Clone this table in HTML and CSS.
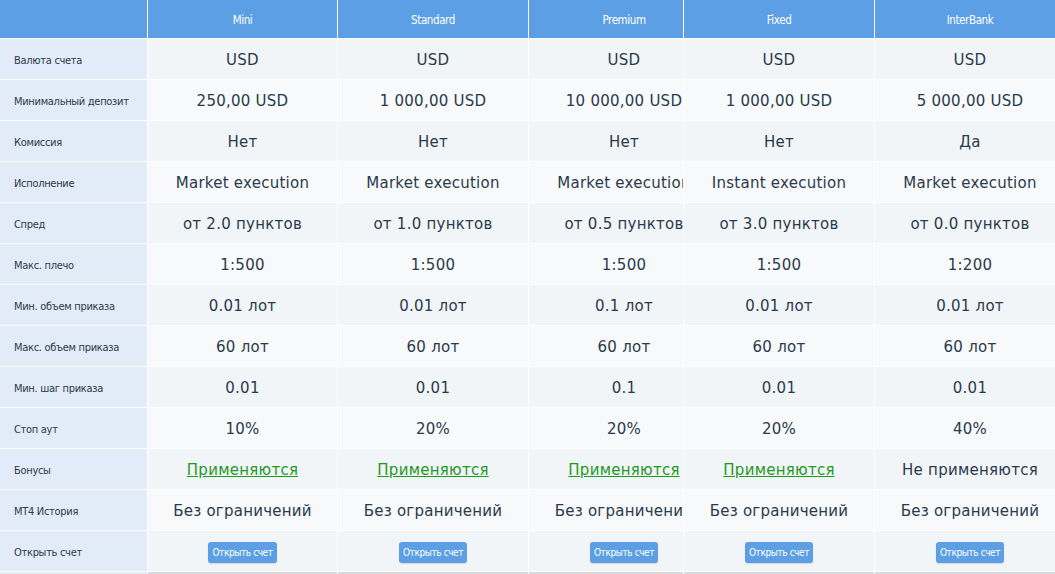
FILE: index.html
```html
<!DOCTYPE html>
<html lang="ru">
<head>
<meta charset="utf-8">
<link rel="stylesheet" href="styles.css">
</head>
<body>
<div class="table">
  <div class="row head">
    <div class="c lab"></div>
    <div class="c">Mini</div>
    <div class="c">Standard</div>
    <div class="c clip"><span class="in">Premium</span></div>
    <div class="c">Fixed</div>
    <div class="c">InterBank</div>
  </div>
  <div class="row a">
    <div class="c lab">Валюта счета</div>
    <div class="c">USD</div><div class="c">USD</div><div class="c clip"><span class="in">USD</span></div><div class="c">USD</div><div class="c">USD</div>
  </div>
  <div class="row b">
    <div class="c lab">Минимальный депозит</div>
    <div class="c">250,00 USD</div><div class="c">1 000,00 USD</div><div class="c clip"><span class="in">10 000,00 USD</span></div><div class="c">1 000,00 USD</div><div class="c">5 000,00 USD</div>
  </div>
  <div class="row a">
    <div class="c lab">Комиссия</div>
    <div class="c">Нет</div><div class="c">Нет</div><div class="c clip"><span class="in">Нет</span></div><div class="c">Нет</div><div class="c">Да</div>
  </div>
  <div class="row b">
    <div class="c lab">Исполнение</div>
    <div class="c">Market execution</div><div class="c">Market execution</div><div class="c clip"><span class="in">Market execution</span></div><div class="c">Instant execution</div><div class="c">Market execution</div>
  </div>
  <div class="row a">
    <div class="c lab">Спред</div>
    <div class="c">от 2.0 пунктов</div><div class="c">от 1.0 пунктов</div><div class="c clip"><span class="in">от 0.5 пунктов</span></div><div class="c">от 3.0 пунктов</div><div class="c">от 0.0 пунктов</div>
  </div>
  <div class="row b">
    <div class="c lab">Макс. плечо</div>
    <div class="c">1:500</div><div class="c">1:500</div><div class="c clip"><span class="in">1:500</span></div><div class="c">1:500</div><div class="c">1:200</div>
  </div>
  <div class="row a">
    <div class="c lab">Мин. объем приказа</div>
    <div class="c">0.01 лот</div><div class="c">0.01 лот</div><div class="c clip"><span class="in">0.1 лот</span></div><div class="c">0.01 лот</div><div class="c">0.01 лот</div>
  </div>
  <div class="row b">
    <div class="c lab">Макс. объем приказа</div>
    <div class="c">60 лот</div><div class="c">60 лот</div><div class="c clip"><span class="in">60 лот</span></div><div class="c">60 лот</div><div class="c">60 лот</div>
  </div>
  <div class="row a">
    <div class="c lab">Мин. шаг приказа</div>
    <div class="c">0.01</div><div class="c">0.01</div><div class="c clip"><span class="in">0.1</span></div><div class="c">0.01</div><div class="c">0.01</div>
  </div>
  <div class="row b">
    <div class="c lab">Стоп аут</div>
    <div class="c">10%</div><div class="c">20%</div><div class="c clip"><span class="in">20%</span></div><div class="c">20%</div><div class="c">40%</div>
  </div>
  <div class="row a">
    <div class="c lab">Бонусы</div>
    <div class="c"><a class="green" href="#">Применяются</a></div><div class="c"><a class="green" href="#">Применяются</a></div><div class="c clip"><span class="in"><a class="green" href="#">Применяются</a></span></div><div class="c"><a class="green" href="#">Применяются</a></div><div class="c">Не применяются</div>
  </div>
  <div class="row b">
    <div class="c lab">МТ4 История</div>
    <div class="c">Без ограничений</div><div class="c">Без ограничений</div><div class="c clip"><span class="in">Без ограничений</span></div><div class="c">Без ограничений</div><div class="c">Без ограничений</div>
  </div>
  <div class="row a">
    <div class="c lab">Открыть счет</div>
    <div class="c"><a class="btn" href="#">Открыть счет</a></div><div class="c"><a class="btn" href="#">Открыть счет</a></div><div class="c clip"><span class="in"><a class="btn" href="#">Открыть счет</a></span></div><div class="c"><a class="btn" href="#">Открыть счет</a></div><div class="c"><a class="btn" href="#">Открыть счет</a></div>
  </div>
  <div class="row tail">
    <div class="c lab"></div><div class="c"></div><div class="c"></div><div class="c"></div><div class="c"></div><div class="c"></div>
  </div>
</div>
</body>
</html>
```

FILE: styles.css
```css
html, body {
  margin: 0;
  padding: 0;
  background: #ffffff;
  overflow: hidden;
}
body {
  width: 1055px;
  height: 574px;
}
.table {
  display: flex;
  flex-direction: column;
  row-gap: 1px;
  width: 1070px;
  background: #ffffff;
}
.row {
  display: grid;
  grid-template-columns: 147px 189px 190px 154px 190px 190px;
  column-gap: 1px;
  height: 40px;
}
.c {
  display: flex;
  align-items: center;
  justify-content: center;
  box-sizing: border-box;
  padding-top: 2px;
  white-space: nowrap;
  font-family: "DejaVu Sans", sans-serif;
  font-size: 15px;
  letter-spacing: 0.25px;
  color: #2a3a4c;
}
.row.a .c { background: #f2f5f8; }
.row.b .c { background: #f7f9fa; }
.row .c.lab {
  background: #e1ecf8;
  justify-content: flex-start;
  padding-left: 14px;
  padding-top: 3px;
  font-family: "DejaVu Sans Condensed", "DejaVu Sans", sans-serif;
  font-stretch: condensed;
  font-size: 11px;
  letter-spacing: -0.3px;
  color: #2c3a48;
}
.c.clip {
  overflow: hidden;
  justify-content: flex-start;
}
.c.clip .in {
  flex: 0 0 190px;
  text-align: center;
}
.row.head {
  height: 38px;
}
.row.head .c {
  background: #5c9fe4;
  color: #ffffff;
  padding-top: 1px;
  font-family: "DejaVu Sans Condensed", "DejaVu Sans", sans-serif;
  font-stretch: condensed;
  font-size: 11.5px;
  letter-spacing: -0.4px;
}
.row.head .c.lab { background: #5c9fe4; }
.green {
  color: #1f9a1f;
  text-decoration: underline;
}
.btn {
  display: inline-block;
  background: #5c9fe4;
  color: #ffffff;
  text-decoration: none;
  font-family: "DejaVu Sans Condensed", "DejaVu Sans", sans-serif;
  font-stretch: condensed;
  font-size: 10px;
  letter-spacing: -0.4px;
  line-height: 21px;
  padding: 0 4px;
  border-radius: 3px;
  box-shadow: 0 1px 1px rgba(0, 0, 0, 0.12);
}
.row.tail {
  height: 6px;
}
.row.tail .c { background: #d9dadb; }
.row.tail .c.lab { background: #e1ecf8; }
```
